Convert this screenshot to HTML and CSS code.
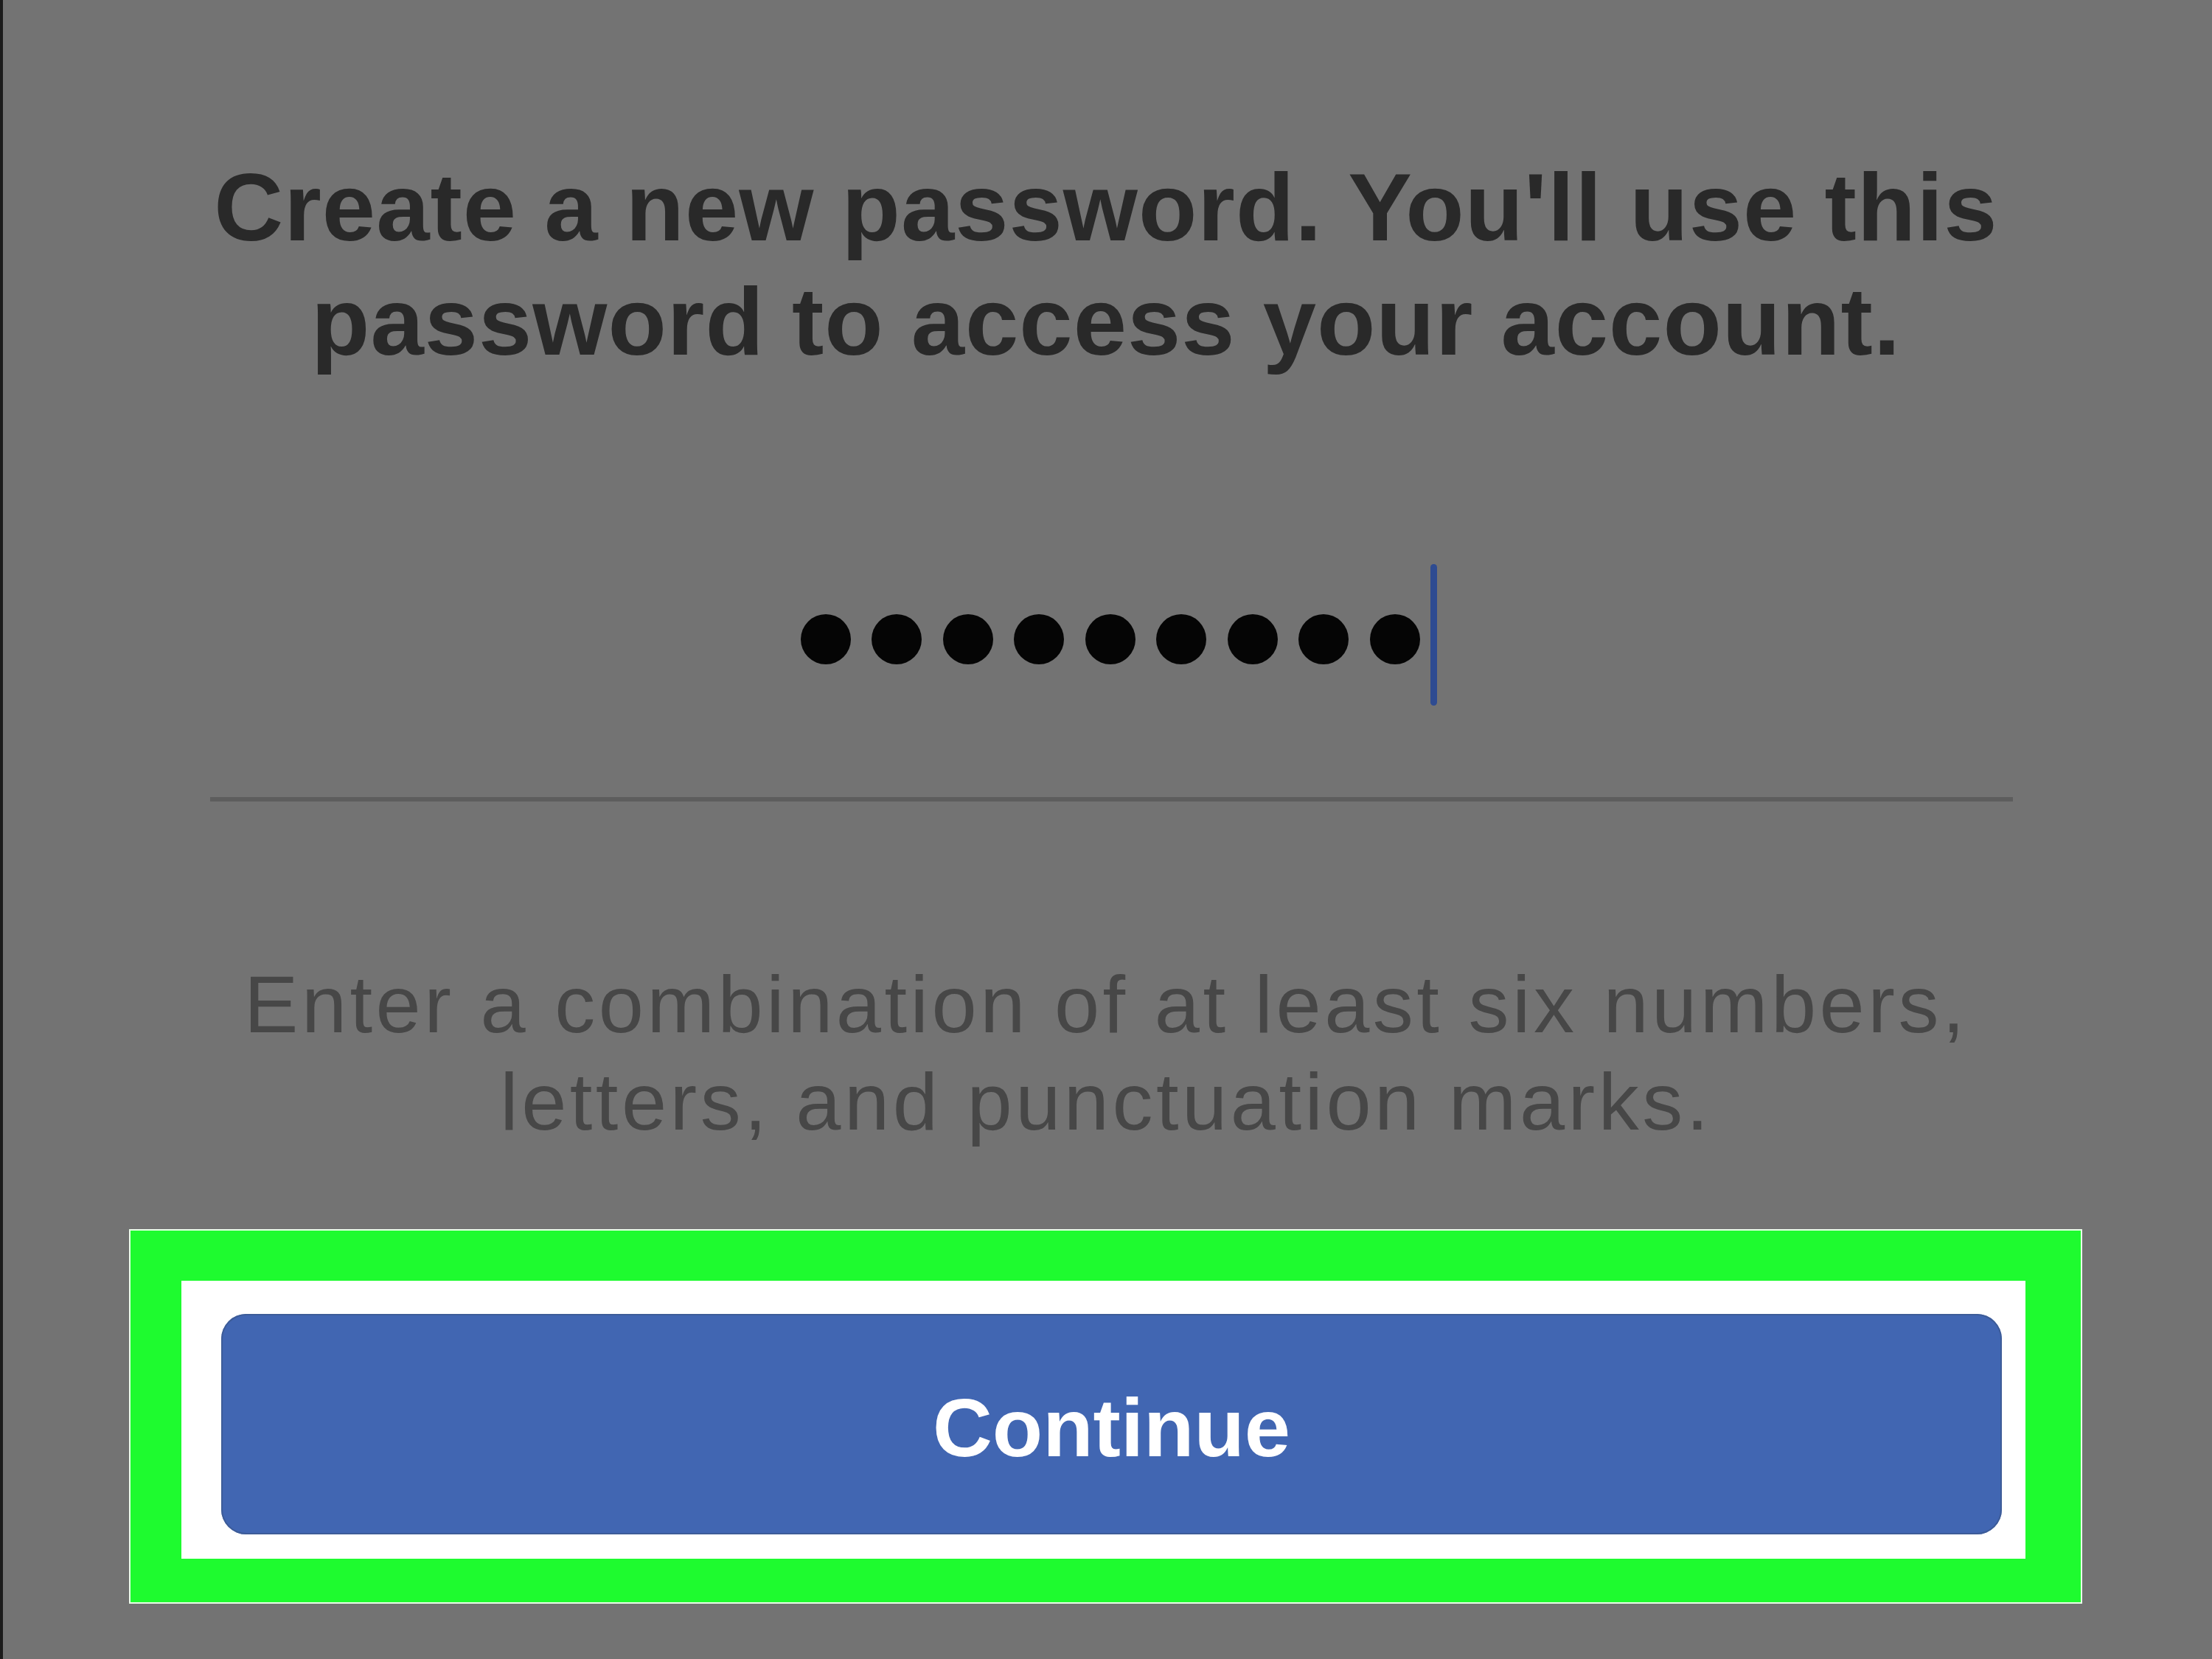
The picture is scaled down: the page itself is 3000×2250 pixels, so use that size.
FILE: index.html
```html
<!DOCTYPE html>
<html lang="en">
<head>
    <meta charset="UTF-8">
    <meta name="viewport" content="width=device-width, initial-scale=1.0">
    <title>Create a new password</title>
    <link rel="stylesheet" href="styles.css">
</head>
<body>
    <main class="screen">
        <p class="title">Create a new password. You'll use this<br>password to access your account.</p>

        <div class="field">
            <div class="dots">
                <span class="dot"></span>
                <span class="dot"></span>
                <span class="dot"></span>
                <span class="dot"></span>
                <span class="dot"></span>
                <span class="dot"></span>
                <span class="dot"></span>
                <span class="dot"></span>
                <span class="dot"></span>
            </div>
            <span class="caret"></span>
        </div>
        <div class="divider"></div>

        <p class="hint">Enter a combination of at least six numbers,<br>letters, and punctuation marks.</p>

        <div class="highlight">
            <button class="continue">Continue</button>
        </div>
    </main>
</body>
</html>
```

FILE: styles.css
```css
html, body {
    margin: 0;
    padding: 0;
}
body {
    background-color: #737373;
    font-family: "Liberation Sans", Arial, sans-serif;
    min-height: 2250px;
}
.screen {
    min-height: 2250px;
    box-shadow: inset 4px 0 0 #1c1c1c;
    display: flex;
    flex-direction: column;
    padding-top: 204px;
    box-sizing: border-box;
}
.title {
    margin: 0;
    text-align: center;
    font-size: 130px;
    font-weight: bold;
    letter-spacing: 1px;
    line-height: 155px;
    color: #292929;
}
.field {
    margin-top: 251px;
    height: 192px;
    display: flex;
    justify-content: center;
    align-items: center;
    gap: 14px;
    padding-left: 34px;
}
.dots {
    display: flex;
    gap: 28.5px;
    margin-top: 12px;
}
.dot {
    width: 68px;
    height: 68px;
    border-radius: 50%;
    background-color: #050505;
}
.caret {
    width: 9px;
    height: 192px;
    border-radius: 5px;
    background-color: #2e4b91;
}
.divider {
    margin: 124px 270px 0 285px;
    height: 6px;
    background-color: #5d5d5d;
}
.hint {
    margin: 209px 0 0;
    text-align: center;
    font-size: 110px;
    letter-spacing: 4.5px;
    line-height: 132px;
    color: #474747;
}
.highlight {
    margin: 109px 178px 0 177px;
    border-style: solid;
    border-color: #1efb2f;
    border-width: 68px 75px 59px 69px;
    background-color: #fff;
    padding: 45px 32px 33px 54px;
    outline: 2px solid #e9ffe9;
}
.continue {
    display: flex;
    align-items: center;
    justify-content: center;
    width: 100%;
    height: 299px;
    padding: 10px 0 0;
    border: none;
    border-radius: 34px;
    background-color: #4166b2;
    box-shadow: inset 0 0 0 2px #3d5c98;
    color: #fff;
    font-family: "Liberation Sans", Arial, sans-serif;
    font-size: 112px;
    font-weight: bold;
}
```
